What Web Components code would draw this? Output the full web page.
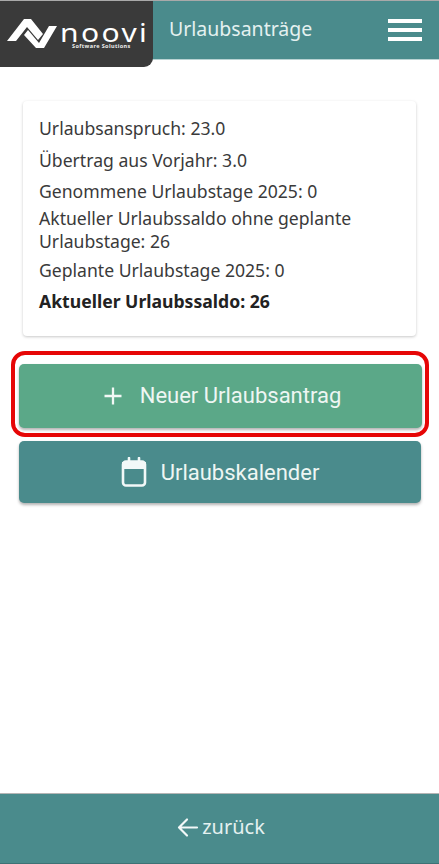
<!DOCTYPE html>
<html lang="de"><head><meta charset="utf-8"><title>Urlaubsanträge</title>
<style>
html,body{margin:0;height:100%;background:#fff}
body{font-family:"Noto Sans",sans-serif;width:439px;height:864px;overflow:hidden}
</style></head><body>
<leave-app></leave-app>
<template id="t-app"><style>
:host{display:flex;flex-direction:column;height:864px}
main{flex:1;display:flex;flex-direction:column;padding:41px 18px 0 19px;min-height:0}
leave-card{margin:0 5px 0 4px}
.hl{margin:15px -8px 0;padding:8.5px 3.5px 4.5px;border:4.5px solid #e60606;border-radius:14px;height:86px;box-sizing:border-box}
action-button.second{margin-top:4px;height:62px}
</style>
<app-header></app-header>
<main>
<leave-card></leave-card>
<div class="hl"><action-button color="#5ba888" icon="plus" gap="18" shift="5">Neuer Urlaubsantrag</action-button></div>
<action-button class="second" color="#4a8b8c" icon="cal" gap="14" shift="0">Urlaubskalender</action-button>
</main>
<back-bar></back-bar>
</template>
<template id="t-header"><style>
:host{display:block;height:60px;box-sizing:border-box;border-top:1px solid #a9a9a9;border-bottom:1px solid #b9d3d3;background:#4a8b8c;position:relative;flex:none}
.bar{display:flex;align-items:center;height:100%;padding-left:169px;padding-right:17px;justify-content:space-between}
h1{margin:0 0 4px;font:400 19.5px "Noto Sans",sans-serif;color:#e4f1f0}
.logo{position:absolute;left:0;top:0;width:153px;height:66px;background:#3a3a3a;border-radius:0 0 9px 0;z-index:1}
.logo svg{display:block;position:absolute;left:0;top:0}
.name{position:absolute;left:60px;top:21px;font:400 25px/20px "Noto Sans",sans-serif;letter-spacing:2px;color:#fff;transform:scaleX(1.2);transform-origin:0 50%}
.sub{position:absolute;left:72px;top:42px;font:700 5.5px/7px "Noto Sans",sans-serif;letter-spacing:.4px;color:#eee;white-space:nowrap}
.menu{display:flex;flex-direction:column;gap:5px;width:34px;margin-bottom:1px}
.menu i{display:block;height:4px;background:#fff}
</style>
<div class="logo">
<svg width="60" height="50" viewBox="0 0 60 50" fill="#fff"><path d="M7 40L24 18H31L43 33L38 39L27 26L16 40Z"/><path d="M24 34L28 29L39 42L49 25H57L44 47H36Z"/></svg>
<span class="name">noovi</span><span class="sub">Software Solutions</span>
</div>
<div class="bar"><h1>Urlaubsanträge</h1><div class="menu"><i></i><i></i><i></i></div></div>
</template>
<template id="t-card"><style>
:host{display:block;height:235px;box-sizing:border-box;background:#fff;border-radius:4px;box-shadow:0 1px 3px rgba(0,0,0,.22);padding:16px 16px 0;color:#3a3a3a;font:400 17.6px/23px "Noto Sans",sans-serif}
p{margin:0}
.a{margin-bottom:9px}
.b{margin-bottom:8px}
.c{margin-bottom:4px}
.d{margin-bottom:6px}
.e{margin-bottom:8px}
b{font-weight:700;color:#222}
</style>
<p class="a">Urlaubsanspruch: 23.0</p>
<p class="b">Übertrag aus Vorjahr: 3.0</p>
<p class="c">Genommene Urlaubstage 2025: 0</p>
<p class="d">Aktueller Urlaubssaldo ohne geplante Urlaubstage: 26</p>
<p class="e">Geplante Urlaubstage 2025: 0</p>
<p><b>Aktueller Urlaubssaldo: 26</b></p>
</template>
<template id="t-btn"><style>
:host{display:flex;align-items:center;justify-content:center;height:64px;box-sizing:border-box;border-radius:5px;color:#eef6f3;font:400 22px "Roboto",sans-serif;box-shadow:0 2px 3px rgba(0,0,0,.3);flex:none}
svg{display:block;flex:none}
</style><span id="i"></span><slot></slot></template>
<template id="t-back"><style>
:host{display:flex;align-items:center;justify-content:center;height:71px;box-sizing:border-box;background:#4a8b8c;border-top:1px solid #b5b5b5;border-bottom:1px solid #3d7275;flex:none;color:#e4f1f0;font:400 20px "Noto Sans",sans-serif;gap:3px;padding:0 0 4px 3px}
svg{display:block}
</style><svg width="22" height="22" viewBox="0 0 22 22" fill="none" stroke="#f2f8f8" stroke-width="2.2" stroke-linecap="round" stroke-linejoin="round"><path d="M20 11.5H2M10 3.5L2 11.5L10 19.5"/></svg><span>zurück</span></template>
<script>
const icons={
plus:'<svg width="18" height="18" viewBox="0 0 18 18" fill="none" stroke="#f2f8f5" stroke-width="2.3"><path d="M9 0.5V17.5M0.5 9H17.5"/></svg>',
cal:'<svg width="26" height="30" viewBox="0 0 26 30" fill="none" stroke="#f2f8f8"><rect x="2" y="4.5" width="22" height="24" rx="3" stroke-width="2.6"/><path d="M1 8.5H25" stroke-width="7"/><path d="M8 1V5M18 1V5" stroke-width="2.6" stroke-linecap="round"/></svg>'};
function def(n,t){customElements.define(n,class extends HTMLElement{constructor(){super();this.attachShadow({mode:'open'}).appendChild(document.getElementById(t).content.cloneNode(true))}})}
def('app-header','t-header');def('leave-card','t-card');def('back-bar','t-back');
customElements.define('action-button',class extends HTMLElement{constructor(){super();this.attachShadow({mode:'open'}).appendChild(document.getElementById('t-btn').content.cloneNode(true))}
connectedCallback(){this.style.background=this.getAttribute('color');this.style.paddingLeft=this.getAttribute('shift')+'px';const i=this.shadowRoot.getElementById('i');i.innerHTML=icons[this.getAttribute('icon')];i.style.marginRight=this.getAttribute('gap')+'px'}});
def('leave-app','t-app');
</script>
</body></html>
